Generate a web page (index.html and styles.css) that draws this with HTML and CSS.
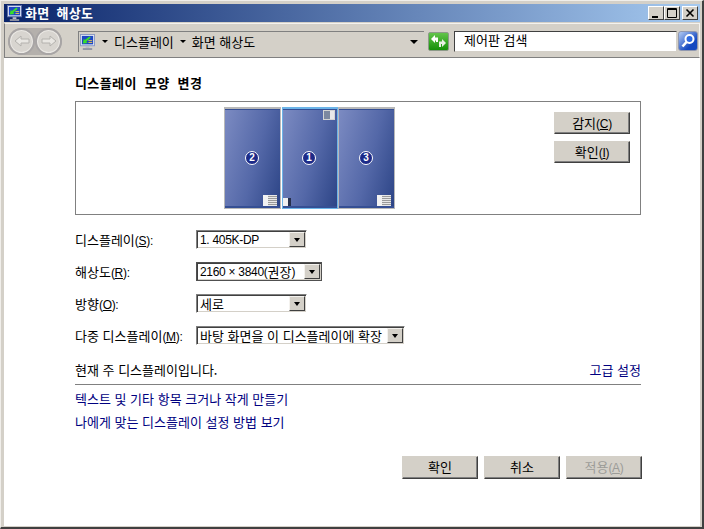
FILE: index.html
```html
<!DOCTYPE html>
<html lang="ko">
<head>
    <meta charset="UTF-8">
    <title>화면 해상도</title>
    <link rel="stylesheet" href="styles.css">
</head>
<body>
<div class="window">
    <div class="titlebar">
        <svg class="app-icon" width="15" height="16" viewBox="0 0 16 17">
            <rect x="0.5" y="0.5" width="15" height="12" fill="#e4e8f4" stroke="#5a6ca8"/>
            <rect x="2" y="2" width="12" height="9" fill="#1f48c4"/>
            <path d="M3 10l1-5 1.200 1.400L10 2.500l1.500 1.500-4.800 4 1.300 1.500z" fill="#38e028"/>
            <path d="M9 7h4M9 9h4" stroke="#e8c850"/>
            <rect x="6" y="13" width="4" height="2" fill="#b8bcc8"/>
            <rect x="3" y="15" width="10" height="2" fill="#9094a4"/>
        </svg>
        <span class="title-text">화면 해상도</span>
        <div class="caption-btns">
            <div class="caption-btn"><svg width="14" height="12" viewBox="0 0 14 12"><rect x="3" y="9" width="6" height="2" fill="#000"/></svg></div>
            <div class="caption-btn"><svg width="14" height="12" viewBox="0 0 14 12"><path d="M2.500 1.500h9v9h-9z M2 2.500h10" fill="none" stroke="#000"/></svg></div>
            <div class="caption-btn close"><svg width="14" height="12" viewBox="0 0 14 12"><path d="M3.500 2.500l7 7M10.500 2.500l-7 7" stroke="#000" stroke-width="1.600"/></svg></div>
        </div>
    </div>
    <div class="toolbar">
        <div class="nav-group">
            <div class="nav-btn"><svg width="20" height="14" viewBox="0 0 20 14"><path d="M3 7l6-5v3h8v4H9v3z" fill="#e9e7e3" stroke="#b4b2ae"/></svg></div>
            <div class="nav-btn"><svg width="20" height="14" viewBox="0 0 20 14"><path d="M17 7l-6-5v3H3v4h8v3z" fill="#e9e7e3" stroke="#b4b2ae"/></svg></div>
        </div>
        <div class="address">
            <svg class="addr-icon" width="15" height="16" viewBox="0 0 16 17">
                <rect x="0.5" y="0.5" width="15" height="12" fill="#e4e8f4" stroke="#8a98c0"/>
                <rect x="2" y="2" width="12" height="9" fill="#1f48c4"/>
                <path d="M3 10l1-5 1.200 1.400L10 2.500l1.500 1.500-4.800 4 1.300 1.500z" fill="#38e028"/>
                <path d="M9 7h4M9 9h4" stroke="#e8c850"/>
                <rect x="6" y="13" width="4" height="2" fill="#b8bcc8"/>
                <rect x="3" y="15" width="10" height="2" fill="#9094a4"/>
            </svg>
            <span class="crumb-arrow first"></span>
            <span class="crumb">디스플레이</span>
            <span class="crumb-arrow"></span>
            <span class="crumb">화면 해상도</span>
            <span class="addr-drop"></span>
        </div>
        <div class="refresh"><svg width="17" height="15" viewBox="0 0 17 15"><path d="M1 5l4-4v2.500h3V8H6V6.500H5V9z" fill="#fff"/><path d="M16 9l-4-4v2.500H9V13h2v-3h1v3z" fill="#e8f0e4"/></svg></div>
        <div class="search">제어판 검색</div>
        <div class="search-btn"><svg width="18" height="18" viewBox="0 0 18 18"><circle cx="10.500" cy="7" r="4" fill="#2f6ae0" stroke="#fff" stroke-width="2"/><path d="M7.500 10l-4 4.500" stroke="#fff" stroke-width="2.600"/></svg></div>
    </div>
    <div class="content">
        <h1 class="heading">디스플레이 모양 변경</h1>
        <div class="canvas">
            <div class="monitor m2"><span class="num">2</span><span class="thumb"></span></div>
            <div class="monitor m1 selected"><span class="corner"></span><span class="num">1</span><span class="mini"></span></div>
            <div class="monitor m3"><span class="num">3</span><span class="thumb"></span></div>
            <div class="canvas-btns">
                <button class="btn small">감지<span class="lat">(<u>C</u>)</span></button>
                <button class="btn small">확인<span class="lat">(<u>I</u>)</span></button>
            </div>
        </div>
        <div class="form-row row-1">
            <label>디스플레이<span class="lat">(<u>S</u>):</span></label>
            <div class="select w110"><span class="lat">1. 405K-DP</span><i class="drop"></i></div>
        </div>
        <div class="form-row">
            <label>해상도<span class="lat">(<u>R</u>):</span></label>
            <div class="select w126 focus"><span class="lat">2160 × 3840(</span>권장<span class="lat">)</span><i class="drop"></i></div>
        </div>
        <div class="form-row">
            <label>방향<span class="lat">(<u>O</u>):</span></label>
            <div class="select w110"><span>세로</span><i class="drop"></i></div>
        </div>
        <div class="form-row">
            <label>다중 디스플레이<span class="lat">(<u>M</u>):</span></label>
            <div class="select w209"><span>바탕 화면을 이 디스플레이에 확장</span><i class="drop"></i></div>
        </div>
        <div class="status-row">
            <span>현재 주 디스플레이입니다.</span>
            <a href="#">고급 설정</a>
        </div>
        <hr class="divider">
        <a class="link" href="#">텍스트 및 기타 항목 크거나 작게 만들기</a>
        <a class="link" href="#">나에게 맞는 디스플레이 설정 방법 보기</a>
        <div class="footer">
            <button class="btn">확인</button>
            <button class="btn">취소</button>
            <button class="btn disabled">적용<span class="lat">(<u>A</u>)</span></button>
        </div>
    </div>
</div>
</body>
</html>
```

FILE: styles.css
```css
html, body {
    margin: 0;
    padding: 0;
    background: #fff;
}
body {
    width: 704px;
    height: 529px;
    overflow: hidden;
    font-family: "Noto Sans CJK KR", "Liberation Sans", sans-serif;
    font-size: 13px;
    color: #000;
}
.lat {
    font-family: "Liberation Sans", sans-serif;
    font-size: 12px;
    letter-spacing: -0.3px;
}
.window {
    box-sizing: border-box;
    width: 704px;
    height: 529px;
    display: flex;
    flex-direction: column;
    background: #d4d0c8;
    border-style: solid;
    border-width: 1px 2px 2px 1px;
    border-color: #f0eeea #404040 #404040 #f0eeea;
    padding: 3px 2px 1px 3px;
}
.titlebar {
    height: 18px;
    flex: none;
    display: flex;
    align-items: center;
    padding: 0 2px 0 3px;
    background: linear-gradient(to right, #0a246a, #a6caf0);
    color: #fff;
    font-weight: bold;
}
.title-text {
    margin-left: 3px;
    line-height: 18px;
    letter-spacing: 0.3px;
    word-spacing: 3px;
}
.caption-btns {
    margin-left: auto;
    display: flex;
}
.caption-btn {
    box-sizing: border-box;
    width: 16px;
    height: 14px;
    background: #d4d0c8;
    border: 1px solid;
    border-color: #fff #404040 #404040 #fff;
    display: flex;
    align-items: center;
    justify-content: center;
}
.caption-btn svg {
    flex: none;
}
.caption-btn.close {
    margin-left: 2px;
}
.toolbar {
    box-sizing: border-box;
    height: 35px;
    flex: none;
    display: flex;
    align-items: center;
    margin-top: 1px;
    background: #d4d0c8;
    border: 1px solid #808080;
    border-top-color: #f4f2ee;
    border-right-color: #f4f2ee;
    padding: 1px 0 0 3px;
}
.nav-group {
    display: flex;
    gap: 0;
    border-radius: 14px;
    background: #b4b0ac;
}
.nav-btn {
    box-sizing: border-box;
    width: 27px;
    height: 27px;
    border-radius: 50%;
    background: #d8d5d0;
    border: 2px solid #a8a5a5;
    box-shadow: inset 0 0 0 1px #eceae6;
    display: flex;
    align-items: center;
    justify-content: center;
}
.address {
    box-sizing: border-box;
    width: 346px;
    height: 21px;
    margin-left: 16px;
    display: flex;
    align-items: center;
    padding-left: 1px;
    border-left: 1px solid #808080;
    border-top: 1px solid #808080;
}
.addr-icon {
    flex: none;
}
.crumb-arrow {
    width: 0;
    height: 0;
    margin: 0 6px 0 6px;
    border: 3px solid transparent;
    border-top: 3px solid #000;
    border-bottom: 0;
}
.crumb-arrow.first {
    margin-left: 7px;
}
.addr-drop {
    width: 0;
    height: 0;
    margin-left: auto;
    margin-right: 6px;
    border: 4px solid transparent;
    border-top: 4px solid #000;
    border-bottom: 0;
}
.refresh {
    box-sizing: border-box;
    width: 21px;
    height: 19px;
    margin-left: 4px;
    background: linear-gradient(#62c44a, #159008);
    border: 1px solid #8c9a88;
    border-radius: 2px;
    display: flex;
    align-items: center;
    justify-content: center;
}
.search {
    box-sizing: border-box;
    width: 223px;
    height: 21px;
    margin-left: 5px;
    padding-left: 9px;
    line-height: 16px;
    background: #fff;
    border: 1px solid;
    border-color: #404040 #d4d0c8 #d4d0c8 #404040;
}
.search-btn {
    box-sizing: border-box;
    width: 20px;
    height: 20px;
    margin-left: 1px;
    background: linear-gradient(135deg, #b4ccf4, #1448c0 70%);
    border-radius: 3px;
    border: 1px solid #9098b0;
    display: flex;
    align-items: center;
    justify-content: center;
}
.content {
    flex: 1;
    box-sizing: border-box;
    background: #fff;
    padding: 15px 59px 0 71px;
}
.heading {
    margin: 0;
    font-size: 13px;
    font-weight: bold;
    line-height: 20px;
    letter-spacing: 0.4px;
    word-spacing: 4px;
}
.canvas {
    position: relative;
    box-sizing: border-box;
    width: 566px;
    height: 114px;
    margin-top: 8px;
    border: 1px solid #808080;
}
.monitor {
    position: absolute;
    top: 5px;
    box-sizing: border-box;
    width: 57px;
    height: 102px;
    background: linear-gradient(105deg, #7c8bc2, #5468a8 55%, #2c4486);
    border: 1px solid #b8b8b8;
    border-top-width: 2px;
    box-shadow: inset 0 1px 0 #354f94, inset 0 -2px 0 #354f94;
}
.m2 { left: 148px; }
.m1 { left: 206px; width: 56px; }
.m3 { left: 262px; }
.m1.selected {
    border-color: #6cb4e8;
}
.num {
    position: absolute;
    left: 20px;
    top: 42px;
    box-sizing: border-box;
    width: 14px;
    height: 14px;
    border-radius: 50%;
    background: #1c2a88;
    border: 1px solid #fff;
    color: #fff;
    font: bold 10px/12px "Liberation Sans", sans-serif;
    text-align: center;
}
.m1 .num {
    left: 19px;
}
.thumb {
    position: absolute;
    right: 3px;
    bottom: 2px;
    width: 14px;
    height: 11px;
    background: repeating-linear-gradient(#e8e8e8 0 1px, #9a9a9a 1px 2px);
    border-left: 5px solid #f2f2f2;
    box-sizing: border-box;
}
.corner {
    position: absolute;
    top: 1px;
    right: 2px;
    box-sizing: border-box;
    width: 12px;
    height: 10px;
    background: linear-gradient(to right, #7c88a0 60%, #e8e8e8 60%);
    border: 1px solid #d4d4d4;
}
.mini {
    position: absolute;
    left: 0;
    bottom: 2px;
    width: 5px;
    height: 8px;
    background: #f0f0f0;
    border-right: 3px solid #26304c;
}
.canvas-btns {
    position: absolute;
    top: 10px;
    left: 478px;
    display: flex;
    flex-direction: column;
    gap: 7px;
}
.btn {
    box-sizing: border-box;
    width: 76px;
    height: 23px;
    padding: 0 0 3px;
    background: #d4d0c8;
    border: 1px solid;
    border-color: #d4d0c8 #404040 #404040 #d4d0c8;
    box-shadow: inset 0 -1px 0 #808080, inset -1px 0 0 #808080;
    font: inherit;
    color: #000;
}
.btn.small {
    height: 22px;
}
.form-row {
    display: flex;
    align-items: center;
    height: 19px;
    margin-top: 13px;
}
.form-row.row-1 {
    margin-top: 15px;
}
.form-row label {
    width: 121px;
    flex: none;
}
.select {
    box-sizing: border-box;
    height: 19px;
    display: flex;
    align-items: center;
    padding-left: 3px;
    background: #fff;
    border: 1px solid;
    border-color: #808080 #fff #fff #808080;
    box-shadow: inset 1px 1px 0 #404040, inset -1px -1px 0 #d4d0c8;
    white-space: nowrap;
    overflow: hidden;
}
.select.focus {
    border-color: #505050;
}
.select > span:first-child {
    white-space: pre;
}
.w110 { width: 111px; }
.w126 { width: 126px; }
.w209 { width: 209px; }
.drop {
    position: relative;
    box-sizing: border-box;
    flex: none;
    width: 16px;
    height: 15px;
    margin-left: auto;
    margin-right: 1px;
    background: #d4d0c8;
    border: 1px solid;
    border-color: #f4f2ee #404040 #404040 #f4f2ee;
}
.drop::after {
    content: "";
    position: absolute;
    left: 4px;
    top: 5px;
    border: 3px solid transparent;
    border-top: 4px solid #000;
    border-bottom: 0;
}
.status-row {
    display: flex;
    justify-content: space-between;
    margin-top: 16px;
    line-height: 18px;
}
a {
    color: #000080;
    text-decoration: none;
}
.divider {
    margin: 5px 0 0;
    border: 0;
    border-top: 1px solid #808080;
}
.link {
    display: block;
    margin-top: 5px;
    line-height: 18px;
}
.footer {
    display: flex;
    justify-content: flex-end;
    gap: 6px;
    margin: 25px -1px 0 0;
}
.btn.disabled {
    color: #9c9c98;
}
```
